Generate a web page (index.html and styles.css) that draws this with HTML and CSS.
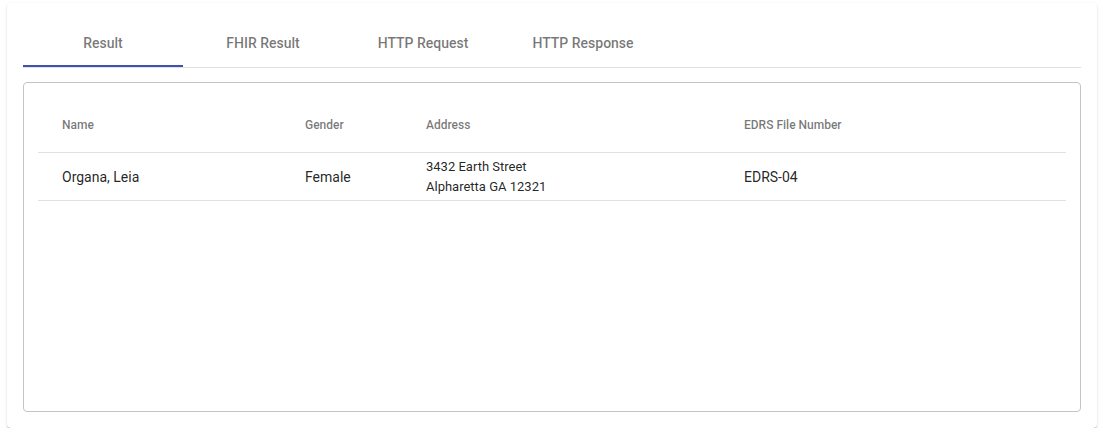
FILE: index.html
```html
<!DOCTYPE html>
<html>
<head>
<meta charset="utf-8">
<link rel="stylesheet" href="styles.css">
</head>
<body>
<div class="card">
  <div class="tabs">
    <div class="tab active">Result</div>
    <div class="tab">FHIR Result</div>
    <div class="tab">HTTP Request</div>
    <div class="tab">HTTP Response</div>
  </div>
  <div class="panel">
    <table class="results">
      <thead>
        <tr>
          <th class="c-name">Name</th>
          <th class="c-gender">Gender</th>
          <th class="c-address">Address</th>
          <th class="c-edrs">EDRS File Number</th>
        </tr>
      </thead>
      <tbody>
        <tr>
          <td class="c-name">Organa, Leia</td>
          <td class="c-gender">Female</td>
          <td class="c-address small">3432 Earth Street<br>Alpharetta GA 12321</td>
          <td class="c-edrs">EDRS-04</td>
        </tr>
      </tbody>
    </table>
  </div>
</div>
</body>
</html>
```
FILE: styles.css
```css
html, body {
  margin: 0;
  padding: 0;
  background: #fff;
}
body {
  font-family: Roboto, "Liberation Sans", Arial, sans-serif;
  padding: 3px 6px 0 7px;
}
.card {
  width: 1090px;
  height: 425px;
  box-sizing: border-box;
  padding: 16px;
  border-radius: 4px;
  background: #fff;
  box-shadow: 0 2px 1px -1px rgba(0,0,0,.2), 0 1px 1px 0 rgba(0,0,0,.14), 0 1px 3px 0 rgba(0,0,0,.12);
}
.tabs {
  display: flex;
  border-bottom: 1px solid rgba(0,0,0,.12);
}
.tab {
  width: 160px;
  height: 48px;
  box-sizing: border-box;
  display: flex;
  align-items: center;
  justify-content: center;
  font-size: 14px;
  font-weight: 500;
  color: rgba(0,0,0,.54);
  border-bottom: 2px solid transparent;
  padding-top: 2px;
}
.tab.active {
  border-bottom-color: #3f51b5;
}
.panel {
  margin-top: 14px;
  height: 330px;
  box-sizing: border-box;
  border: 1px solid #c4c4c4;
  border-radius: 4px;
  padding: 14px;
}
.results {
  width: 100%;
  border-collapse: collapse;
}
.results th {
  height: 55px;
  text-align: left;
  font-size: 12px;
  font-weight: 500;
  color: rgba(0,0,0,.54);
  border-bottom: 1px solid rgba(0,0,0,.12);
  padding: 0;
}
.results td {
  height: 47px;
  font-size: 14px;
  color: rgba(0,0,0,.87);
  border-bottom: 1px solid rgba(0,0,0,.12);
  padding: 0;
  line-height: 20px;
}
.results td.small {
  font-size: 13px;
}
.c-name { width: 267px; padding-left: 24px !important; box-sizing: border-box; }
.c-gender { width: 121px; }
.c-address { width: 318px; }
.c-edrs { padding-right: 24px !important; }
```
